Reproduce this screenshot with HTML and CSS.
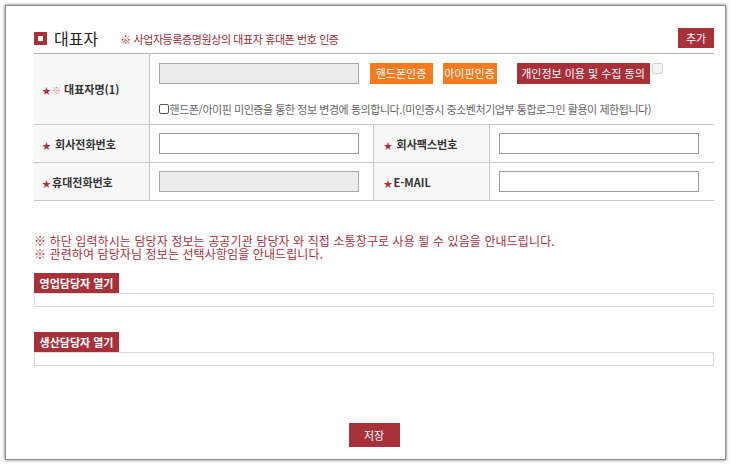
FILE: index.html
```html
<!DOCTYPE html>
<html lang="ko">
<head>
  <meta charset="UTF-8">
  <title>대표자 정보</title>
  <link rel="stylesheet" href="styles.css">
</head>
<body>
  <div class="frame">
    <div class="head">
      <span class="head-icon"></span>
      <h2 class="head-title">대표자</h2>
      <span class="head-note">※ 사업자등록증명원상의 대표자 휴대폰 번호 인증</span>
      <button class="btn btn-red btn-add">추가</button>
    </div>

    <table class="form-table">
      <colgroup>
        <col class="col-label">
        <col class="col-value">
        <col class="col-label2">
        <col class="col-value2">
      </colgroup>
      <tr class="row-tall">
        <th><span class="star">★</span><span class="mark">※</span> 대표자명(1)</th>
        <td colspan="3">
          <div class="auth-line">
            <input type="text" class="inp inp-off" disabled>
            <button class="btn btn-orange btn-hp">핸드폰인증</button>
            <button class="btn btn-orange btn-ipin">아이핀인증</button>
            <button class="btn btn-red btn-agree">개인정보 이용 및 수집 동의</button>
            <input type="checkbox" class="chk-agree">
          </div>
          <label class="agree-line"><input type="checkbox" class="chk-small">핸드폰/아이핀 미인증을 통한 정보 변경에 동의합니다.(미인증시 중소벤처기업부 통합로그인 활용이 제한됩니다)</label>
        </td>
      </tr>
      <tr>
        <th><span class="star">★</span> 회사전화번호</th>
        <td><input type="text" class="inp"></td>
        <th class="th2"><span class="star">★</span> 회사팩스번호</th>
        <td><input type="text" class="inp"></td>
      </tr>
      <tr>
        <th><span class="star">★</span>휴대전화번호</th>
        <td><input type="text" class="inp inp-off" disabled></td>
        <th class="th2"><span class="star">★</span>E-MAIL</th>
        <td><input type="text" class="inp"></td>
      </tr>
    </table>

    <div class="notice">
      <p class="notice-line">※ 하단 입력하시는 담당자 정보는 공공기관 담당자 와 직접 소통창구로 사용 될 수 있음을 안내드립니다.</p>
      <p class="notice-line">※ 관련하여 담당자님 정보는 선택사항임을 안내드립니다.</p>
    </div>

    <div class="section section-first">
      <button class="btn btn-red btn-tab">영업담당자 열기</button>
      <div class="section-box"></div>
    </div>

    <div class="section">
      <button class="btn btn-red btn-tab">생산담당자 열기</button>
      <div class="section-box"></div>
    </div>

    <div class="save-row">
      <button class="btn btn-red btn-save">저장</button>
    </div>
  </div>
</body>
</html>
```

FILE: styles.css
```css
body {
  margin: 0;
  font-family: "Noto Sans CJK KR", "Noto Sans", sans-serif;
  font-size: 11px;
  color: #333;
  background: #fff;
}

.frame {
  margin: 5px;
  width: 721px;
  height: 455px;
  box-sizing: border-box;
  border: 1px solid #8c8c8c;
  box-shadow: 0 0 3px rgba(0, 0, 0, 0.6);
  padding: 22px 11px 0 28px;
}

/* header */
.head {
  display: flex;
  align-items: center;
  height: 20px;
  margin-bottom: 5px;
}

.head-icon {
  width: 13px;
  height: 13px;
  background: #a83238;
  display: flex;
  align-items: center;
  justify-content: center;
  margin-right: 7px;
}

.head-icon::after {
  content: '';
  width: 5px;
  height: 5px;
  background: #fff;
}

.head-title {
  margin: 0;
  font-size: 16px;
  font-weight: normal;
  color: #222;
  line-height: 20px;
}

.head-note {
  margin-left: 22px;
  padding-top: 2px;
  color: #a02a33;
  font-size: 11px;
  letter-spacing: -0.4px;
}

/* buttons */
.btn {
  font-family: inherit;
  font-size: 11px;
  color: #fff;
  border: 0;
  padding: 0;
  margin: 0;
  cursor: pointer;
  height: 21px;
  line-height: 21px;
}

.btn-red {
  background: #a83139;
}

.btn-orange {
  background: #f57a20;
}

.btn-add {
  margin-left: auto;
  width: 36px;
  height: 20px;
  line-height: 20px;
}

/* form table */
.form-table {
  width: 680px;
  border-collapse: collapse;
  border-top: 1px solid #b4b4b4;
  border-bottom: 1px solid #bdbdbd;
}

.col-label { width: 115px; }
.col-value { width: 224px; }
.col-label2 { width: 116px; }
.col-value2 { width: 225px; }

.form-table tr {
  border-bottom: 1px solid #c8c8c8;
}

.form-table th {
  background: #f8f8f8;
  text-align: left;
  padding: 0 0 0 8px;
  font-weight: bold;
  color: #333;
  height: 37px;
  border-right: 1px solid #c8c8c8;
  white-space: nowrap;
}

.form-table .th2 {
  padding-left: 10px;
  border-left: 1px solid #c8c8c8;
}

.form-table td {
  padding: 0 0 0 9px;
  height: 37px;
}

.row-tall th,
.row-tall td {
  height: 70px;
}

.row-tall td {
  vertical-align: top;
  padding-top: 9px;
  box-sizing: border-box;
}

.star {
  color: #a83238;
  font-size: 9px;
  margin-right: 1px;
}

.mark {
  color: #d0707a;
  font-weight: normal;
  font-size: 9px;
}

.inp {
  display: block;
  width: 200px;
  height: 21px;
  box-sizing: border-box;
  border: 1px solid #9c9c9c;
  background: #fff;
  margin: 0;
}

.inp-off {
  background: #ececec;
  border-color: #a8a8a8;
}

.auth-line {
  display: flex;
  align-items: flex-start;
}

.btn-hp {
  width: 63px;
  margin-left: 11px;
}

.btn-ipin {
  width: 54px;
  margin-left: 10px;
}

.btn-agree {
  width: 133px;
  margin-left: 20px;
}

.chk-agree {
  appearance: none;
  width: 11px;
  height: 11px;
  margin: 0 0 0 2px;
  border: 1px solid #cfcfcf;
  border-radius: 2px;
  background: #f3f3f3;
}

.agree-line {
  display: flex;
  align-items: center;
  margin-top: 17px;
  color: #666;
  font-size: 11px;
  letter-spacing: -0.45px;
}

.chk-small {
  appearance: none;
  width: 10px;
  height: 10px;
  margin: 0 1px 0 0;
  border: 1px solid #555;
  border-radius: 2px;
  background: #fff;
}

/* notices and sections */
.notice {
  margin-top: 33px;
  color: #a83238;
  font-size: 12px;
  letter-spacing: 0.1px;
}

.notice-line {
  margin: 0;
  line-height: 13px;
}

.section {
  margin-top: 25px;
}

.section-first {
  margin-top: 13px;
}

.btn-tab {
  display: block;
  width: 85px;
  height: 20px;
  line-height: 20px;
  font-weight: bold;
}

.section-box {
  height: 14px;
  box-sizing: border-box;
  border: 1px solid #dcdcdc;
}

.save-row {
  margin-top: 57px;
  text-align: center;
}

.btn-save {
  width: 51px;
  height: 24px;
  line-height: 24px;
}
```
